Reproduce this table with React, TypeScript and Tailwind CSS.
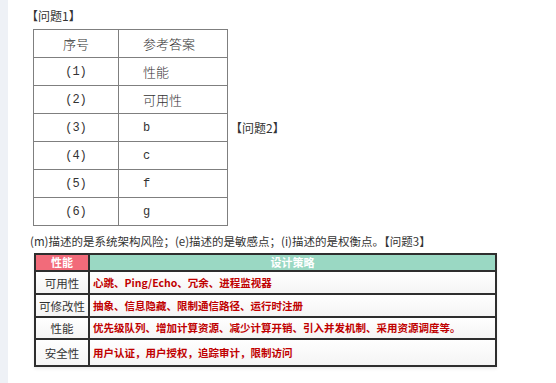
import React from 'react';

const answers = [
  { no: '(1)', ans: '性能', cjk: true },
  { no: '(2)', ans: '可用性', cjk: true },
  { no: '(3)', ans: 'b', cjk: false },
  { no: '(4)', ans: 'c', cjk: false },
  { no: '(5)', ans: 'f', cjk: false },
  { no: '(6)', ans: 'g', cjk: false },
];

const strategies = [
  { attr: '可用性', text: '心跳、Ping/Echo、冗余、进程监视器', h: 'h-[23px]' },
  { attr: '可修改性', text: '抽象、信息隐藏、限制通信路径、运行时注册', h: 'h-[23px]' },
  { attr: '性能', text: '优先级队列、增加计算资源、减少计算开销、引入并发机制、采用资源调度等。', h: 'h-[22px]' },
  { attr: '安全性', text: '用户认证，用户授权，追踪审计，限制访问', h: 'h-[27px]' },
];

const cjk = "font-['Noto_Sans_CJK_SC',sans-serif]";
const mono = "font-['Liberation_Mono','Noto_Sans_CJK_SC',monospace]";

export default function App() {
  return (
    <div className={`flex h-[383px] w-[556px] bg-white text-[#333] ${cjk}`}>
      {/* side strip */}
      <div className="w-[8px] shrink-0 bg-[#eef1f6]" />

      <div className="flex flex-col pl-[20px] pt-[7px]">
        <div className="h-[18px] text-[12px] leading-[18px] -ml-[2px]">【问题1】</div>

        <div className="mt-[4px] flex items-center">
          <div className="ml-[5px]">
            <table className="border-collapse border border-[#7f7f7f]">
              <tbody>
                <tr className="h-[28px]">
                  <td className="w-[85px] border border-[#7f7f7f] text-center text-[13px] font-light">序号</td>
                  <td className="w-[109px] border border-[#7f7f7f] pl-[24px] text-[13px] font-light">参考答案</td>
                </tr>
                {answers.map((r) => (
                  <tr key={r.no} className="h-[28px]">
                    <td className={`border border-[#7f7f7f] text-center text-[12px] ${mono}`}>{r.no}</td>
                    <td
                      className={`border border-[#7f7f7f] pl-[24px] ${
                        r.cjk ? 'text-[13px] font-light' : `text-[12px] ${mono}`
                      }`}
                    >
                      {r.ans}
                    </td>
                  </tr>
                ))}
              </tbody>
            </table>
          </div>
          <div className="ml-[2px] text-[12px] leading-[18px]">【问题2】</div>
        </div>

        <div className="mt-[6px] h-[18px] whitespace-nowrap text-[11.5px] leading-[18px] ml-[2px]">
          (m)描述的是系统架构风险；(e)描述的是敏感点；(i)描述的是权衡点。【问题3】
        </div>

        {/* 问题3 table */}
        <div className="ml-[6px] mt-[3px] w-[463px] shadow-[0_2px_3px_rgba(0,0,0,0.08)]">
          <table className="w-full table-fixed border-collapse border-2 border-[#2e2e2e] text-[11.5px]">
            <tbody>
              <tr className="h-[17px]">
                <td className="w-[54px] border-2 border-[#2e2e2e] bg-[#f26b7a] text-center text-[11px] font-bold leading-[13px] text-white">
                  性能
                </td>
                <td className="border-2 border-[#2e2e2e] bg-[#9ad8c3] text-center text-[11px] font-bold leading-[13px] text-white">
                  设计策略
                </td>
              </tr>
              {strategies.map((s) => (
                <tr key={s.attr} className={`${s.h} bg-gradient-to-b from-white to-[#f4f4f4]`}>
                  <td className="whitespace-nowrap border-2 border-[#2e2e2e] text-center leading-[14px] text-[#333]">
                    {s.attr}
                  </td>
                  <td className="whitespace-nowrap border-2 border-[#2e2e2e] pl-[3px] text-[10.5px] font-bold leading-[14px] text-[#c00000]">
                    {s.text}
                  </td>
                </tr>
              ))}
            </tbody>
          </table>
        </div>
      </div>
    </div>
  );
}
